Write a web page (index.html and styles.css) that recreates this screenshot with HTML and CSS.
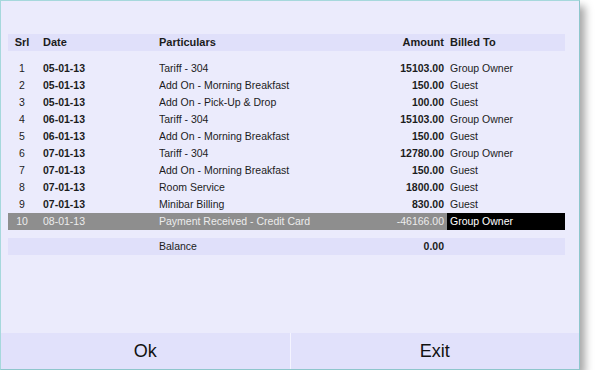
FILE: index.html
```html
<!DOCTYPE html>
<html lang="en">
<head>
    <meta charset="UTF-8">
    <title>Folio</title>
    <link rel="stylesheet" href="styles.css">
</head>
<body>
    <div class="window">
        <div class="sheet">
            <table class="folio">
                <colgroup>
                    <col class="c-srl">
                    <col class="c-date">
                    <col class="c-part">
                    <col class="c-amt">
                    <col class="c-bill">
                </colgroup>
                <thead>
                    <tr class="head">
                        <th class="srl">Srl</th>
                        <th class="date">Date</th>
                        <th class="part">Particulars</th>
                        <th class="amt">Amount</th>
                        <th class="bill">Billed To</th>
                    </tr>
                </thead>
                <tbody>
                    <tr class="gap"><td colspan="5"></td></tr>
                    <tr><td class="srl">1</td><td class="date">05-01-13</td><td class="part">Tariff - 304</td><td class="amt">15103.00</td><td class="bill">Group Owner</td></tr>
                    <tr><td class="srl">2</td><td class="date">05-01-13</td><td class="part">Add On - Morning Breakfast</td><td class="amt">150.00</td><td class="bill">Guest</td></tr>
                    <tr><td class="srl">3</td><td class="date">05-01-13</td><td class="part">Add On - Pick-Up &amp; Drop</td><td class="amt">100.00</td><td class="bill">Guest</td></tr>
                    <tr><td class="srl">4</td><td class="date">06-01-13</td><td class="part">Tariff - 304</td><td class="amt">15103.00</td><td class="bill">Group Owner</td></tr>
                    <tr><td class="srl">5</td><td class="date">06-01-13</td><td class="part">Add On - Morning Breakfast</td><td class="amt">150.00</td><td class="bill">Guest</td></tr>
                    <tr><td class="srl">6</td><td class="date">07-01-13</td><td class="part">Tariff - 304</td><td class="amt">12780.00</td><td class="bill">Group Owner</td></tr>
                    <tr><td class="srl">7</td><td class="date">07-01-13</td><td class="part">Add On - Morning Breakfast</td><td class="amt">150.00</td><td class="bill">Guest</td></tr>
                    <tr><td class="srl">8</td><td class="date">07-01-13</td><td class="part">Room Service</td><td class="amt">1800.00</td><td class="bill">Guest</td></tr>
                    <tr><td class="srl">9</td><td class="date">07-01-13</td><td class="part">Minibar Billing</td><td class="amt">830.00</td><td class="bill">Guest</td></tr>
                    <tr class="selected"><td class="srl">10</td><td class="date">08-01-13</td><td class="part">Payment Received - Credit Card</td><td class="amt">-46166.00</td><td class="bill">Group Owner</td></tr>
                    <tr class="gap small"><td colspan="5"></td></tr>
                    <tr class="balance"><td class="srl"></td><td class="date"></td><td class="part">Balance</td><td class="amt">0.00</td><td class="bill"></td></tr>
                </tbody>
            </table>
        </div>
        <div class="buttons">
            <button class="btn">Ok</button>
            <button class="btn">Exit</button>
        </div>
    </div>
</body>
</html>
```

FILE: styles.css
```css
body {
    margin: 0;
    background-color: #ffffff;
    font-family: "Liberation Sans", Arial, sans-serif;
    color: #1c1c1c;
}

.window {
    width: 578px;
    height: 368px;
    border: 1px solid #8ec6cc;
    border-left-color: #a6d8dc;
    border-top-color: #a6d8dc;
    background-color: #ebebfc;
    box-shadow: 5px 6px 8px rgba(0, 0, 0, 0.35);
    display: flex;
    flex-direction: column;
}

.sheet {
    flex: 1;
    padding: 33px 14px 0 7px;
}

/* folio table */
.folio {
    width: 557px;
    border-collapse: collapse;
    border-spacing: 0;
    table-layout: fixed;
}

.c-srl { width: 28px; }
.c-date { width: 123px; }
.c-part { width: 221px; }
.c-amt { width: 67px; }
.c-bill { width: 118px; }

.folio th,
.folio td {
    height: 17px;
    padding: 0;
    font-size: 10.5px;
    line-height: 17px;
    white-space: nowrap;
    overflow: hidden;
    text-align: left;
}

.folio th {
    font-size: 11px;
    font-weight: bold;
}

.head,
.balance {
    background-color: #e0e0fa;
}

.srl { text-align: center !important; }
.date { padding-left: 7px !important; }
.amt { text-align: right !important; padding-right: 3px !important; }
.bill { padding-left: 3px !important; }

td.date,
td.amt {
    font-weight: bold;
}

.gap td {
    height: 9px;
    line-height: 9px;
}

.gap.small td {
    height: 8px;
    line-height: 8px;
}

.selected td {
    background-color: #8e8e8e;
    color: #ececec;
    font-weight: normal !important;
}

.selected td.bill {
    background-color: #000000;
    color: #ffffff;
}

/* bottom buttons */
.buttons {
    height: 36px;
    display: flex;
}

.btn {
    flex: 1;
    border: none;
    margin: 0;
    padding: 0;
    background-color: #e1e1fb;
    font-family: "Liberation Sans", Arial, sans-serif;
    font-size: 18px;
    color: #111111;
    cursor: pointer;
}

.btn + .btn {
    border-left: 1px solid #f4f4ff;
}
```
